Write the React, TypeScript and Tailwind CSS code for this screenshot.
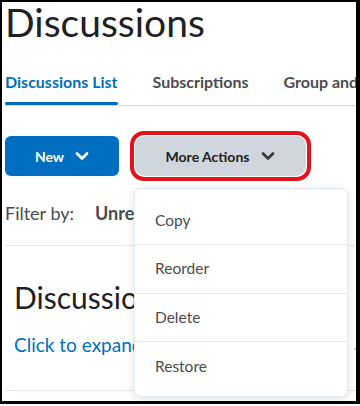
import React from "react";

const Chevron = ({ color }: { color: string }) => (
  <svg width="14" height="10" viewBox="0 0 14 10" className="block">
    <polyline points="2,2.5 7,7.5 12,2.5" fill="none" stroke={color} strokeWidth="2.8" strokeLinecap="round" strokeLinejoin="round" />
  </svg>
);

export default function App() {
  return (
    <div className="w-[360px] h-[406px] bg-white overflow-hidden" style={{ fontFamily: "Lato, 'Noto Sans', sans-serif" }}>
      <div className="relative w-[360px] h-[404px] border-l-2 border-t-2 border-r-[4px] border-b-[3px] border-black overflow-hidden">
        <h1 className="text-[39px] leading-[38px] mt-[1px] pl-[3px] text-[#202122] font-normal whitespace-nowrap">Discussions</h1>

        <div className="mt-[29px] ml-[3px] flex border-b border-[#d3d9e3] whitespace-nowrap">
          <div className="relative pb-[11px] text-[16px] leading-[24px] font-bold text-[#006fbf]">
            Discussions List
            <div className="absolute left-0 right-0 bottom-0 h-[3px] rounded-full bg-[#006fbf]" />
          </div>
          <div className="ml-[35px] pb-[11px] text-[16px] leading-[24px] font-bold text-[#494c4e]">Subscriptions</div>
          <div className="ml-[35px] pb-[11px] text-[16px] leading-[24px] font-bold text-[#494c4e]">Group and Section Restrictions</div>
        </div>

        <div className="mt-[25px] ml-[3px] flex items-center">
          <div className="w-[114px] h-[40px] rounded-[6px] bg-[#006fbf] flex items-center justify-center gap-[11px] text-white text-[14px] font-bold">
            <span>New</span>
            <Chevron color="#ffffff" />
          </div>
          <div className="ml-[11px] rounded-[14px] border-[4px] border-[#e5121b] p-[1px]">
            <div className="w-[171px] h-[40px] rounded-[10px] bg-[#cfd6dd] flex items-center justify-center gap-[12px] text-[#202122] text-[14px] font-bold">
              <span>More Actions</span>
              <Chevron color="#3a3c3e" />
            </div>
          </div>
        </div>

        <div className="mt-[19px] ml-[3px] flex text-[18px] leading-[27px] text-[#494c4e] whitespace-nowrap">
          <span>Filter by:</span>
          <span className="ml-[21px] font-bold">Unread</span>
        </div>
        <div className="mt-[18px] ml-[3px] border-b border-[#e3e9f1]" />

        <div className="pl-[12px] mt-[36px] text-[30px] leading-[30px] text-[#202122] whitespace-nowrap">Discussions</div>
        <div className="pl-[12px] mt-[22px] text-[19px] leading-[22px] text-[#006fbf] whitespace-nowrap">Click to expand</div>
        <div className="mt-[34px] ml-[3px] border-b border-[#e3e9f1]" />

        <div className="absolute left-[352px] top-[346px] w-[2px] h-[2px] bg-[#c0c4c8]" />

        <div className="absolute left-[132px] top-[186px] w-[214px] rounded-[6px] border border-[#e3e9f1] bg-white shadow-[0_2px_10px_rgba(0,0,0,0.12)] pt-[7.5px] pb-[5.5px]">
          {["Copy", "Reorder", "Delete", "Restore"].map((t, i) => (
            <div
              key={t}
              className={`h-[48.5px] flex items-center pl-[20px] text-[15.5px] text-[#494c4e] ${i < 3 ? "border-b border-[#e3e9f1]" : ""}`}
            >
              {t}
            </div>
          ))}
        </div>
      </div>
    </div>
  );
}
